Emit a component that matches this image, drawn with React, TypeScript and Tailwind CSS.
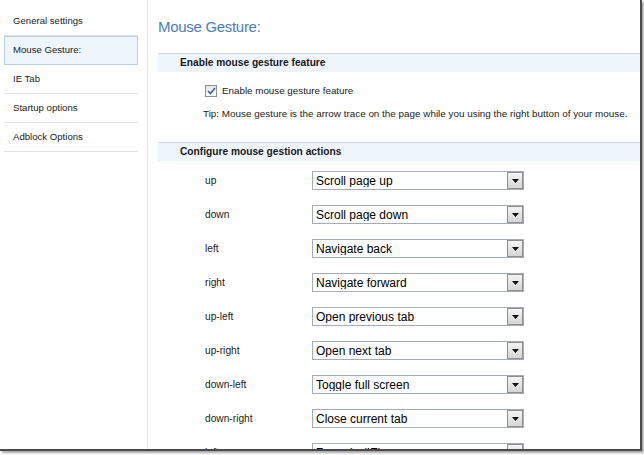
import React from 'react';

const navItems = ['General settings', 'Mouse Gesture:', 'IE Tab', 'Startup options', 'Adblock Options'];

const gestures: [string, string][] = [
  ['up', 'Scroll page up'],
  ['down', 'Scroll page down'],
  ['left', 'Navigate back'],
  ['right', 'Navigate forward'],
  ['up-left', 'Open previous tab'],
  ['up-right', 'Open next tab'],
  ['down-left', 'Toggle full screen'],
  ['down-right', 'Close current tab'],
  ['left-up', 'Zoom in (IE)'],
];

const FakeSelect = ({ value }: { value: string }) => (
  <div className="flex h-[19px] w-[212px] items-center border border-[#a5acb5] bg-white">
    <span className="flex-1 truncate pl-[3px] text-[12px] leading-none text-black">{value}</span>
    <div className="flex h-[17px] w-[16px] items-center justify-center border border-[#8f8f8f] bg-gradient-to-b from-[#f4f4f4] to-[#d6d6d6]">
      <svg width="7" height="4" viewBox="0 0 7 4">
        <path d="M0 0h7L3.5 4z" fill="#111" />
      </svg>
    </div>
  </div>
);

const SectionHeader = ({ title }: { title: string }) => (
  <div className="flex h-[19px] items-center border-t border-[#c9d8ec] bg-[#eef5fd] pl-[22px] text-[10.2px] font-bold text-[#1a1a1a]">
    {title}
  </div>
);

export default function App() {
  return (
    <div className="h-[455px] w-[644px] overflow-hidden bg-white font-['Liberation_Sans',Arial,sans-serif]">
      <div className="flex h-[451px] w-[642px] overflow-hidden border-b-[2px] border-r-[2px] border-[#4a4a4a] shadow-[2px_2px_2px_rgba(0,0,0,0.35)]">
        {/* Sidebar */}
        <div className="w-[148px] shrink-0 border-r border-[#e6e6e6] pt-[7px]">
          <div className="w-[138px] pl-[4px]">
            {navItems.map((item) => {
              const active = item === 'Mouse Gesture:';
              return (
                <div
                  key={item}
                  className={
                    active
                      ? 'flex h-[29px] items-center border border-[#b9cfe8] bg-[#eef5fd] pl-[8px] text-[9.6px] text-[#222]'
                      : 'flex h-[29px] items-center border-b border-[#e2e2e2] pl-[9px] text-[9.6px] text-[#222]'
                  }
                >
                  {item}
                </div>
              );
            })}
          </div>
        </div>

        {/* Content */}
        <div className="flex-1 pl-[10px]">
          <h1 className="pt-[18px] text-[15px] font-light leading-[18px] tracking-[-0.3px] text-[#4b7cc6]">Mouse Gesture:</h1>
          <div className="mt-[17px]">
            <SectionHeader title="Enable mouse gesture feature" />
            <div className="flex items-center pl-[47px] pt-[12px] text-[9.8px] text-[#222]">
              <div className="mr-[5px] flex h-[12px] w-[12px] items-center justify-center border border-[#8e8f8f] bg-gradient-to-b from-[#e8e8e8] to-[#fafafa]">
                <svg width="9" height="8" viewBox="0 0 9 8">
                  <path d="M1 4l2.5 2.5L8 1" stroke="#3a5fb0" strokeWidth="1.6" fill="none" />
                </svg>
              </div>
              Enable mouse gesture feature
            </div>
            <div className="whitespace-nowrap pl-[45px] pt-[8px] text-[9.9px] text-[#222]">
              Tip: Mouse gesture is the arrow trace on the page while you using the right button of your mouse.
            </div>
          </div>
          <div className="mt-[20px]">
            <SectionHeader title="Configure mouse gestion actions" />
            <div className="pt-[3px]">
              {gestures.map(([label, action]) => (
                <div key={label} className="flex h-[34px] items-center">
                  <span className="w-[154px] pl-[47px] text-[10.2px] text-[#222]">{label}</span>
                  <FakeSelect value={action} />
                </div>
              ))}
            </div>
          </div>
        </div>
      </div>
    </div>
  );
}
